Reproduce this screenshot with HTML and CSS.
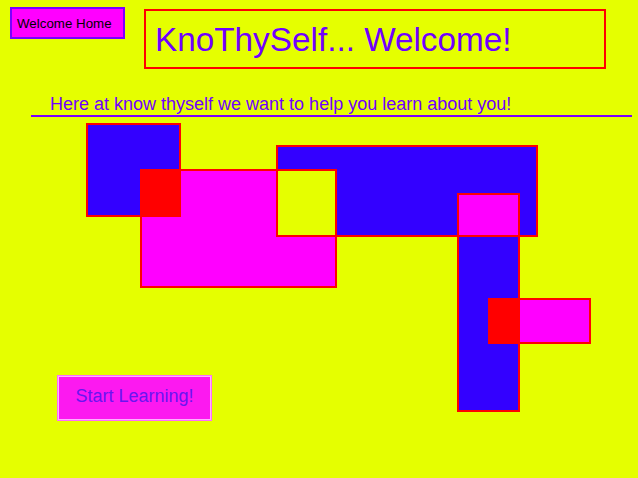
FILE: index.html
```html
<!DOCTYPE html>
<html lang="en">
<head>
<meta charset="utf-8">
<title>KnoThySelf</title>
<link rel="stylesheet" href="styles.css">
</head>
<body>
<header class="top">
  <button class="home-btn">Welcome Home</button>
  <div class="title-box"><h1 class="title">KnoThySelf... Welcome!</h1></div>
</header>
<p class="intro">Here at know thyself we want to help you learn about you!</p>
<section class="stage">
  <svg class="art" width="638" height="300" viewBox="0 117 638 300" xmlns="http://www.w3.org/2000/svg">
    <g stroke="#ff0000" stroke-width="2">
      <rect x="87" y="124" width="93" height="92" fill="#3300ff"/>
      <rect x="141" y="170" width="195" height="117" fill="#ff00ff"/>
      <rect x="141" y="170" width="39" height="46" fill="#ff0000"/>
      <rect x="277" y="146" width="260" height="90" fill="#3300ff"/>
      <rect x="277" y="170" width="59" height="66" fill="#e5ff00"/>
      <rect x="458" y="194" width="61" height="217" fill="#3300ff"/>
      <rect x="458" y="194" width="61" height="42" fill="#ff00ff"/>
      <rect x="489" y="299" width="101" height="44" fill="#ff00ff"/>
      <rect x="489" y="299" width="30" height="44" fill="#ff0000"/>
    </g>
  </svg>
  <button class="start-btn">Start Learning!</button>
</section>
</body>
</html>
```
FILE: styles.css
```css
html, body {
  margin: 0;
  padding: 0;
}
body {
  background: #e5ff00;
  font-family: "Liberation Sans", Arial, sans-serif;
  width: 638px;
  height: 478px;
  overflow: hidden;
}
.top {
  display: flex;
  align-items: flex-start;
  gap: 19px;
  padding: 7px 0 0 10px;
}
.home-btn {
  box-sizing: border-box;
  width: 115px;
  height: 32px;
  margin: 0;
  padding: 0 0 0 5px;
  display: flex;
  align-items: center;
  background: #ff00ff;
  border: 2px solid #7a00ff;
  color: #000;
  font-family: "Liberation Sans", Arial, sans-serif;
  font-size: 13.333px;
  text-align: left;
}
.title-box {
  box-sizing: border-box;
  width: 462px;
  height: 60px;
  margin-top: 2px;
  padding: 10px 9px 8px;
  border: 2px solid #ff0000;
}
.title {
  margin: 0;
  font-size: 33.3px;
  font-weight: normal;
  line-height: 38px;
  color: #7000ff;
}
.intro {
  margin: 25px 6px 0 31px;
  padding: 0 0 0 19px;
  font-size: 18px;
  line-height: 21px;
  color: #7000ff;
  border-bottom: 2px solid #7a00ff;
}
.stage {
  display: grid;
}
.stage > * {
  grid-area: 1 / 1;
}
.art {
  display: block;
}
.start-btn {
  align-self: start;
  justify-self: start;
  box-sizing: border-box;
  width: 155px;
  height: 46px;
  margin: 258px 0 0 57px;
  padding: 0 0 3px;
  display: flex;
  align-items: center;
  justify-content: center;
  background: #fc19f0;
  border: 1px solid #ff6cff;
  box-shadow: inset 0 0 0 1px #ffb0ff;
  color: #6a14f0;
  font-family: "Liberation Sans", Arial, sans-serif;
  font-size: 18px;
}
```
